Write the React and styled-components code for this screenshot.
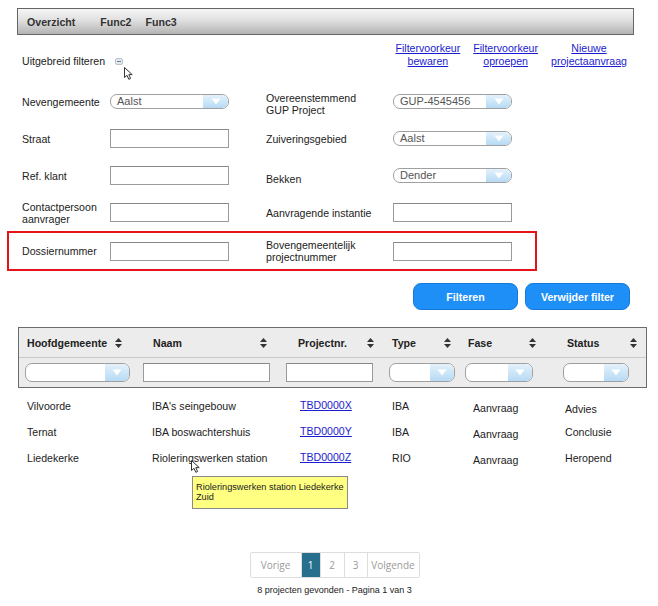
import styled, { createGlobalStyle } from "styled-components";

const GlobalStyle = createGlobalStyle`
  body {
    margin: 0;
    background: #fff;
    font-family: "Liberation Sans", Arial, sans-serif;
    font-size: 10.6px;
    color: #222;
  }
`;

const Page = styled.div`
  width: 658px;
  position: relative;
`;

const TopBar = styled.div`
  margin: 8px 24px 0 17px;
  height: 25px;
  border: 1px solid #666;
  background: linear-gradient(#f6f6f6, #e0e0e0 45%, #b4b4b4);
  display: flex;
  align-items: center;
  padding-left: 9px;
`;

const NavItem = styled.span`
  font-weight: bold;
  color: #333;
  margin-right: ${p => p.$space}px;
`;

const FilterHeader = styled.div`
  margin: 7px 31px 0 22px;
  height: 26px;
  display: flex;
  justify-content: space-between;
  align-items: flex-end;
`;

const Toggle = styled.div`
  position: relative;
  display: flex;
  align-items: center;
  gap: 10px;
  line-height: 13px;
`;

const Pointer = styled.div`
  position: absolute;
  left: ${p => p.$x}px;
  top: ${p => p.$y}px;
  line-height: 0;
`;

const Links = styled.div`
  display: flex;
  gap: 13px;
`;

const LinkItem = styled.a`
  text-align: center;
  color: #1b1bd0;
  text-decoration: underline;
  line-height: 13px;
  cursor: pointer;
`;

const Form = styled.div`
  margin-top: 15px;
`;

const FormRow = styled.div`
  height: 37px;
  display: flex;
  align-items: center;
  padding-left: 22px;
`;

const Highlight = styled.div`
  margin-left: 7px;
  width: 530px;
  height: 40px;
  box-sizing: border-box;
  border: 2px solid #e5141b;
  display: flex;
  align-items: center;
  padding-left: 13px;
`;

const Field = styled.div`
  display: flex;
  align-items: center;
  width: ${p => p.$w}px;
`;

const Label = styled.div`
  width: ${p => p.$w}px;
  line-height: 12px;
  margin-top: ${p => p.$dy || 0}px;
`;

const TextInput = styled.div`
  width: ${p => p.$w || 119}px;
  height: 19px;
  box-sizing: border-box;
  border: 1px solid #9a9a9a;
  border-top-color: #888;
  background: #fff;
`;

const SelectBox = styled.div`
  width: ${p => p.$w || 119}px;
  height: ${p => p.$h || 15}px;
  box-sizing: border-box;
  border: 1px solid #a0a0a0;
  border-radius: 7px;
  overflow: hidden;
  display: flex;
  background: #fff;
`;

const SelectValue = styled.div`
  flex: 1;
  padding-left: 6px;
  color: #555;
  font-size: 11px;
  line-height: 12px;
`;

const SelectArrow = styled.div`
  width: ${p => p.$w || 25}px;
  background: linear-gradient(#e4f1fb, #b6daf5);
  display: flex;
  align-items: center;
  justify-content: center;
`;

const ButtonRow = styled.div`
  display: flex;
  justify-content: flex-end;
  gap: 7px;
  margin: 12px 28px 0 0;
`;

const Button = styled.button`
  width: 105px;
  height: 27px;
  border-radius: 8px;
  border: 1px solid #1679d8;
  background: #1e8ff7;
  color: #fff;
  font-family: "Liberation Sans", Arial, sans-serif;
  font-size: 10.6px;
  font-weight: bold;
  cursor: pointer;
`;

const COLS = "120px 142px 102px 78px 96px 89px";

const TableBox = styled.div`
  margin: 17px 0 0 18px;
  width: 629px;
  box-sizing: border-box;
  border: 1px solid #6c6c6c;
  background: #ececec;
`;

const HeadRow = styled.div`
  display: grid;
  grid-template-columns: ${COLS};
  height: 29px;
  border-bottom: 1px solid #c9c9c9;
`;

const HeadCell = styled.div`
  display: flex;
  align-items: center;
  justify-content: space-between;
  padding: 0 ${p => p.$pr}px 0 ${p => p.$pl}px;
  font-weight: bold;
  color: #222;
`;

const FilterRow = styled.div`
  display: grid;
  grid-template-columns: ${COLS};
  height: 29px;
`;

const FilterCell = styled.div`
  display: flex;
  align-items: center;
  padding-left: ${p => p.$pl}px;
`;

const DataArea = styled.div`
  position: relative;
  margin: 5px 0 0 19px;
`;

const DataRow = styled.div`
  display: grid;
  grid-template-columns: ${COLS};
  height: 26px;
  align-items: center;
`;

const DataCell = styled.div`
  padding-left: ${p => p.$pl}px;
  margin-top: ${p => (p.$dy || 0) * 2}px;
  white-space: nowrap;
`;

const CodeLink = styled.a`
  color: #1b1bd0;
  text-decoration: underline;
  cursor: pointer;
`;

const Tooltip = styled.div`
  position: absolute;
  left: 173px;
  top: 83px;
  width: 156px;
  height: 33px;
  box-sizing: border-box;
  padding: 5px 3px;
  background: #ffff82;
  border: 1px solid #8a8a8a;
  font-size: 9.2px;
  line-height: 10px;
  white-space: nowrap;
  color: #222;
`;

const Footer = styled.div`
  margin-top: 81px;
  padding-left: 11px;
  display: flex;
  flex-direction: column;
  align-items: center;
`;

const Pager = styled.div`
  display: flex;
  height: 26px;
  border: 1px solid #dedede;
  border-radius: 2px;
  box-sizing: border-box;
`;

const PageItem = styled.div`
  width: ${p => p.$w}px;
  display: flex;
  align-items: center;
  justify-content: center;
  font-family: "Open Sans", sans-serif;
  font-size: 10px;
  color: ${p => (p.$active ? "#fff" : "#9a9a9a")};
  background: ${p => (p.$active ? "#276f8d" : "#fff")};
  border-left: ${p => (p.$first ? "none" : "1px solid #dedede")};
`;

const Status = styled.div`
  margin-top: 7px;
  font-size: 9px;
  color: #222;
`;

function DownTriangle() {
  return (
    <svg width="10" height="7" viewBox="0 0 10 7">
      <path d="M0.5 0.5 L9.5 0.5 L5 6.5 Z" fill="#fff" />
    </svg>
  );
}

function Select({ value, w, h, arrow }) {
  return (
    <SelectBox $w={w} $h={h}>
      <SelectValue>{value}</SelectValue>
      <SelectArrow $w={arrow}>
        <DownTriangle />
      </SelectArrow>
    </SelectBox>
  );
}

function SortIcon() {
  return (
    <svg width="7" height="10" viewBox="0 0 7 10">
      <path d="M3.5 0 L7 4 L0 4 Z M0 6 L7 6 L3.5 10 Z" fill="#333" />
    </svg>
  );
}

function CursorIcon() {
  return (
    <svg width="10" height="13" viewBox="0 0 10 13">
      <path
        d="M0.5 0.5 L0.5 10.5 L3 8.3 L4.8 12.3 L6.6 11.5 L4.8 7.6 L8.2 7.6 Z"
        fill="#fff"
        stroke="#333"
        strokeWidth="1"
        strokeLinejoin="round"
      />
    </svg>
  );
}

function MinusIcon() {
  return (
    <svg width="8" height="7" viewBox="0 0 8 7">
      <rect x="0.5" y="0.5" width="7" height="6" rx="1.5" fill="#e3e8ee" stroke="#b9c2cc" />
      <rect x="2" y="3" width="4" height="1" fill="#6d7f92" />
    </svg>
  );
}

const columns = [
  { label: "Hoofdgemeente", pl: 8, pr: 17, fl: 6, fw: 105, kind: "select", dl: 8 },
  { label: "Naam", pl: 14, pr: 14, fl: 4, fw: 127, kind: "input", dl: 13 },
  { label: "Projectnr.", pl: 17, pr: 9, fl: 5, fw: 87, kind: "input", dl: 19 },
  { label: "Type", pl: 9, pr: 10, fl: 6, fw: 66, kind: "select", dl: 9 },
  { label: "Fase", pl: 7, pr: 21, fl: 4, fw: 68, kind: "select", dl: 12, dy: 2 },
  { label: "Status", pl: 10, pr: 9, fl: 6, fw: 66, kind: "select", dl: 8 },
];

const projects = [
  ["Vilvoorde", "IBA's seingebouw", "TBD0000X", "IBA", "Aanvraag", "Advies", 3],
  ["Ternat", "IBA boswachtershuis", "TBD0000Y", "IBA", "Aanvraag", "Conclusie", 0],
  ["Liedekerke", "Rioleringswerken station", "TBD0000Z", "RIO", "Aanvraag", "Heropend", 0],
];

export default function App() {
  return (
    <Page>
      <GlobalStyle />
      <TopBar>
        <NavItem $space={25}>Overzicht</NavItem>
        <NavItem $space={14}>Func2</NavItem>
        <NavItem $space={0}>Func3</NavItem>
      </TopBar>

      <FilterHeader>
        <Toggle>
          <span>Uitgebreid filteren</span>
          <MinusIcon />
          <Pointer $x={102} $y={12}>
            <CursorIcon />
          </Pointer>
        </Toggle>
        <Links>
          <LinkItem>Filtervoorkeur<br />bewaren</LinkItem>
          <LinkItem>Filtervoorkeur<br />oproepen</LinkItem>
          <LinkItem>Nieuwe<br />projectaanvraag</LinkItem>
        </Links>
      </FilterHeader>

      <Form>
        <FormRow>
          <Field $w={244}>
            <Label $w={88}>Nevengemeente</Label>
            <Select value="Aalst" />
          </Field>
          <Field>
            <Label $w={127} $dy={4}>Overeenstemmend<br />GUP Project</Label>
            <Select value="GUP-4545456" />
          </Field>
        </FormRow>
        <FormRow>
          <Field $w={244}>
            <Label $w={88}>Straat</Label>
            <TextInput />
          </Field>
          <Field>
            <Label $w={127}>Zuiveringsgebied</Label>
            <Select value="Aalst" />
          </Field>
        </FormRow>
        <FormRow>
          <Field $w={244}>
            <Label $w={88}>Ref. klant</Label>
            <TextInput />
          </Field>
          <Field>
            <Label $w={127} $dy={6}>Bekken</Label>
            <Select value="Dender" />
          </Field>
        </FormRow>
        <FormRow>
          <Field $w={244}>
            <Label $w={88}>Contactpersoon<br />aanvrager</Label>
            <TextInput />
          </Field>
          <Field>
            <Label $w={127}>Aanvragende instantie</Label>
            <TextInput />
          </Field>
        </FormRow>
        <Highlight>
          <Field $w={244}>
            <Label $w={88}>Dossiernummer</Label>
            <TextInput />
          </Field>
          <Field>
            <Label $w={127}>Bovengemeentelijk<br />projectnummer</Label>
            <TextInput />
          </Field>
        </Highlight>
      </Form>

      <ButtonRow>
        <Button>Filteren</Button>
        <Button>Verwijder filter</Button>
      </ButtonRow>

      <TableBox>
        <HeadRow>
          {columns.map(c => (
            <HeadCell key={c.label} $pl={c.pl} $pr={c.pr}>
              <span>{c.label}</span>
              <SortIcon />
            </HeadCell>
          ))}
        </HeadRow>
        <FilterRow>
          {columns.map(c => (
            <FilterCell key={c.label} $pl={c.fl}>
              {c.kind === "select" ? (
                <Select value="" w={c.fw} h={19} arrow={24} />
              ) : (
                <TextInput $w={c.fw} />
              )}
            </FilterCell>
          ))}
        </FilterRow>
      </TableBox>

      <DataArea>
        {projects.map(p => (
          <DataRow key={p[2]}>
            <DataCell $pl={columns[0].dl}>{p[0]}</DataCell>
            <DataCell $pl={columns[1].dl}>{p[1]}</DataCell>
            <DataCell $pl={columns[2].dl} $dy={-1}>
              <CodeLink>{p[2]}</CodeLink>
            </DataCell>
            <DataCell $pl={columns[3].dl}>{p[3]}</DataCell>
            <DataCell $pl={columns[4].dl} $dy={columns[4].dy}>{p[4]}</DataCell>
            <DataCell $pl={columns[5].dl} $dy={p[6]}>{p[5]}</DataCell>
          </DataRow>
        ))}
        <Pointer $x={172} $y={67}>
          <CursorIcon />
        </Pointer>
        <Tooltip>
          Rioleringswerken station Liedekerke<br />Zuid
        </Tooltip>
      </DataArea>

      <Footer>
        <Pager>
          <PageItem $w={50} $first>Vorige</PageItem>
          <PageItem $w={18} $active>1</PageItem>
          <PageItem $w={23}>2</PageItem>
          <PageItem $w={22}>3</PageItem>
          <PageItem $w={51}>Volgende</PageItem>
        </Pager>
        <Status>8 projecten gevonden - Pagina 1 van 3</Status>
      </Footer>
    </Page>
  );
}
